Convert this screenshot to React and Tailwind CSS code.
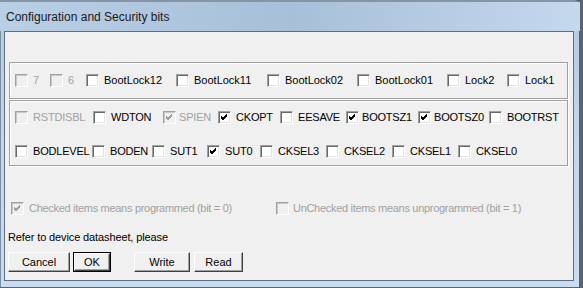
import React from 'react'

const lockBits = [
  { label: '7', w: 'w-[35px]', disabled: true },
  { label: '6', w: 'w-[36px]', disabled: true },
  { label: 'BootLock12', w: 'w-[90px]' },
  { label: 'BootLock11', w: 'w-[91px]' },
  { label: 'BootLock02', w: 'w-[90px]' },
  { label: 'BootLock01', w: 'w-[90px]' },
  { label: 'Lock2', w: 'w-[60px]' },
  { label: 'Lock1', w: 'w-[50px]' },
]

const fuseHigh = [
  { label: 'RSTDISBL', w: 'w-[78px]', disabled: true },
  { label: 'WDTON', w: 'w-[70px]' },
  { label: 'SPIEN', w: 'w-[55px]', disabled: true, checked: true, tight: true },
  { label: 'CKOPT', w: 'w-[62px]', checked: true },
  { label: 'EESAVE', w: 'w-[66px]' },
  { label: 'BOOTSZ1', w: 'w-[72px]', checked: true, tight: true },
  { label: 'BOOTSZ0', w: 'w-[71px]', checked: true, tight: true },
  { label: 'BOOTRST', w: 'w-[70px]' },
]

const fuseLow = [
  { label: 'BODLEVEL', w: 'w-[77px]' },
  { label: 'BODEN', w: 'w-[60px]' },
  { label: 'SUT1', w: 'w-[55px]' },
  { label: 'SUT0', w: 'w-[53px]', checked: true },
  { label: 'CKSEL3', w: 'w-[66px]' },
  { label: 'CKSEL2', w: 'w-[66px]' },
  { label: 'CKSEL1', w: 'w-[66px]' },
  { label: 'CKSEL0', w: 'w-[60px]' },
]

function Check({ checked, disabled }) {
  return (
    <span
      className={
        'relative inline-block w-[13px] h-[13px] shrink-0 border border-t-[#a0a0a0] border-l-[#a0a0a0] border-b-white border-r-white ' +
        (disabled
          ? 'bg-[#f0f0f0] shadow-[inset_1px_1px_0_#c8c8c8]'
          : 'bg-white shadow-[inset_1px_1px_0_#696969,inset_-1px_-1px_0_#e3e3e3]')
      }
    >
      {checked && (
        <svg className="absolute left-[2px] top-[2px]" width="7" height="7" viewBox="0 0 7 7">
          <path
            d="M0 2 L2 4 L6 0 M0 3 L2 5 L6 1 M0 4 L2 6 L6 2"
            stroke={disabled ? '#a0a0a0' : '#000'}
            strokeWidth="1"
            fill="none"
            shapeRendering="crispEdges"
          />
        </svg>
      )}
    </span>
  )
}

function Bit({ label, w, checked, disabled, tight }) {
  return (
    <div className={'flex items-center ' + w}>
      <Check checked={checked} disabled={disabled} />
      <span className={(tight ? 'ml-[3px] ' : 'ml-[5px] ') + (disabled ? 'text-[#a0a0a0]' : 'text-black')}>
        {label}
      </span>
    </div>
  )
}

function Button({ children, w, isDefault }) {
  return (
    <div className={'h-[20px] ' + w + (isDefault ? ' border border-black' : '')}>
      <div className="h-full w-full flex items-center justify-center bg-[#f0f0f0] border border-t-white border-l-white border-b-[#404040] border-r-[#404040] shadow-[inset_-1px_-1px_0_#a0a0a0]">
        {children}
      </div>
    </div>
  )
}

export default function App() {
  return (
    <div className="w-[583px] h-[288px] bg-[#5a6470] overflow-hidden text-[11px] leading-[13px] font-['Liberation_Sans',Arial,sans-serif]">
      <div className="w-[580px] h-[287px] flex flex-col rounded-tr-[6px] border-t-[2px] border-[#8595a5] bg-gradient-to-b from-[#b3c9e0] via-[#c3d7ec] to-[#c9dcf0] shadow-[inset_1px_0_0_#7b8ea3,inset_-1px_0_0_#55636f]">
        <div className="h-[29px] flex items-center pl-[6px] pt-[2px] text-[12px] text-[#1a1a1a] bg-gradient-to-r from-[#b9cfe6] via-[#a7bfd8] to-[#c4d8ee]">
          Configuration and Security bits
        </div>
        <div className="mx-[4px] mr-[6px] h-[250px] border border-[#5d6f82] bg-[#f0f0f0] flex flex-col pl-[4px] pr-[4px]">
          <div className="h-[30px] shrink-0" />
          <div className="mr-[1px] h-[37px] shrink-0 border border-[#a0a0a0] shadow-[inset_1px_1px_0_#fff,1px_1px_0_#fff] flex items-center pl-[5px]">
            {lockBits.map((b) => (
              <Bit key={b.label} {...b} />
            ))}
          </div>
          <div className="mt-[1px] mr-[1px] h-[66px] shrink-0 border border-[#a0a0a0] shadow-[inset_1px_1px_0_#fff,1px_1px_0_#fff] flex flex-col gap-[21px] pt-[10px] pl-[5px] tracking-[-0.2px]">
            <div className="flex items-center">
              {fuseHigh.map((b) => (
                <Bit key={b.label} {...b} />
              ))}
            </div>
            <div className="flex items-center">
              {fuseLow.map((b) => (
                <Bit key={b.label} {...b} />
              ))}
            </div>
          </div>
          <div className="mt-[36px] flex items-center pl-[2px] tracking-[-0.3px]">
            <div className="flex items-center w-[265px]">
              <Check checked disabled />
              <span className="ml-[5px] text-[#a0a0a0]">Checked items means programmed (bit = 0)</span>
            </div>
            <div className="flex items-center">
              <Check disabled />
              <span className="ml-[4px] text-[#a0a0a0]">UnChecked items means unprogrammed (bit = 1)</span>
            </div>
          </div>
          <div className="mt-[16px] -ml-[1px] text-black tracking-[-0.12px]">Refer to device datasheet, please</div>
          <div className="mt-[8px] -ml-[1px] flex items-center">
            <Button w="w-[62px]">Cancel</Button>
            <div className="w-[3px]" />
            <Button w="w-[38px]" isDefault>OK</Button>
            <div className="w-[23px]" />
            <Button w="w-[56px]">Write</Button>
            <div className="w-[4px]" />
            <Button w="w-[49px]">Read</Button>
          </div>
        </div>
      </div>
    </div>
  )
}
